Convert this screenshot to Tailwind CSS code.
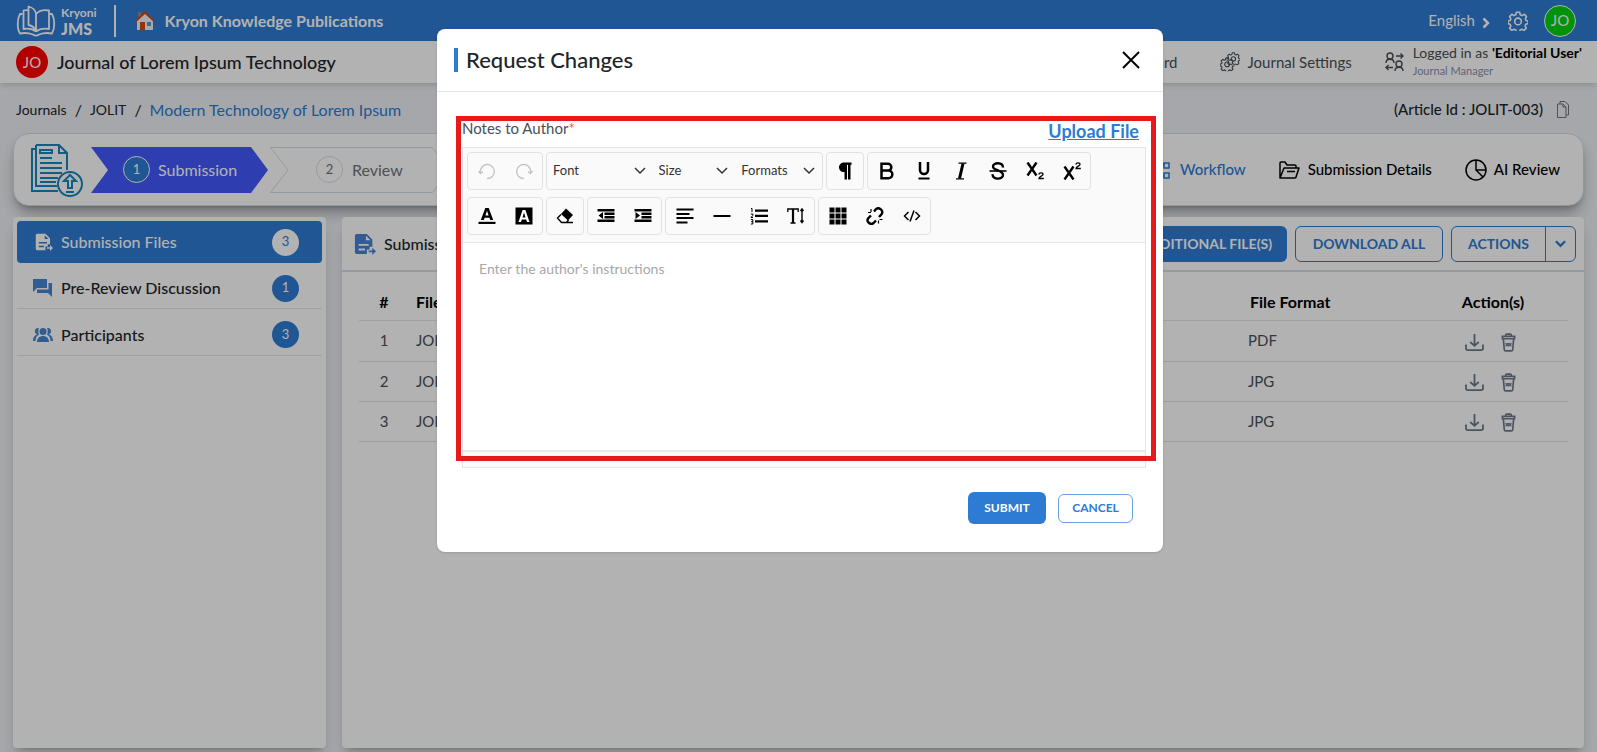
<!DOCTYPE html>
<html lang="en">
<head>
  <meta charset="UTF-8">
  <meta name="viewport" content="width=device-width, initial-scale=1.0">
  <title>Kryoni JMS | Request Changes</title>
  <script src="https://cdn.jsdelivr.net/npm/@tailwindcss/browser@4"></script>
</head>
<body class="relative flex flex-col min-h-screen overflow-hidden bg-[#edf0f4] text-[#212529] font-['Lato','Open_Sans',sans-serif]">

  <!-- Shared icons -->
  <svg class="hidden">
    <symbol id="i-file" viewBox="0 0 24 24">
      <path fill="currentColor" fill-rule="evenodd" d="M3 1h11l6 6v8h-3v3h-3v5H3a2 2 0 0 1-2-2V3a2 2 0 0 1 2-2zm10 2v5h5zM5 12v2h11v-2zm0 5v2h7v-2z"/>
      <path fill="currentColor" d="M16 19h4v-3l4 4-4 4v-3h-4z"/>
    </symbol>
    <symbol id="i-download" viewBox="0 0 20 18">
      <path d="M10 0v12M5.500 8.500 10 12.500l4.500-4M1 11v4a2 2 0 0 0 2 2h14a2 2 0 0 0 2-2v-4" fill="none" stroke="currentColor" stroke-width="1.900"/>
    </symbol>
    <symbol id="i-trash" viewBox="0 0 16 20">
      <path d="M5 3V2a1 1 0 0 1 1-1h4a1 1 0 0 1 1 1v1M1.500 3.500h13V6h-13zM2.500 6l1 11.500a1.500 1.500 0 0 0 1.500 1.500h6a1.500 1.500 0 0 0 1.500-1.500l1-11.500" fill="none" stroke="currentColor" stroke-width="1.800"/>
      <path d="M5 10.500l1.500 3.500L8 10.500l1.500 3.500 1.500-3.500M5 14l1.500-3.500L8 14l1.500-3.500L11 14" fill="none" stroke="currentColor"/>
    </symbol>
    <symbol id="i-chevron" viewBox="0 0 12 8">
      <path d="M1 1l5 5 5-5" fill="none" stroke="currentColor" stroke-width="1.500"/>
    </symbol>
    <symbol id="i-gear" viewBox="0 0 24 24">
      <path d="M10 1.500h4l.7 3 2.200 1 2.700-1.600 2.700 2.800-1.500 2.600.9 2.200 2.500.6v3l-2.800.7-.9 2.200 1.500 2.600-2.700 2.700-2.600-1.500-2.200.9-.6 2.800h-3.800l-.7-2.800-2.200-.9-2.600 1.500-2.700-2.700 1.500-2.600-.9-2.200-2.500-.7v-3l2.500-.6.9-2.200-1.500-2.600 2.700-2.800 2.600 1.600 2.200-1z" fill="none" stroke="currentColor" stroke-width="1.900" stroke-linejoin="round"/>
      <circle cx="12" cy="12.500" r="4" fill="none" stroke="currentColor" stroke-width="1.900"/>
    </symbol>
  </svg>

  <!-- Top bar -->
  <header class="flex items-center h-[41px] pl-4 pr-[21px] bg-[#2d7bd3] text-white">
    <svg class="w-[40px] h-8 mr-[5px]" viewBox="0 0 40 32" fill="none" stroke="currentColor" stroke-width="1.800" stroke-linejoin="round">
      <path d="M20 26.500c-3-2.500-7-3.500-12.500-2.500V5.500c2-.5 3.500-.5 5 0M20 26.500c3-2.500 7-3.500 13-2.500V5.500c-5-1-10 0-13 3.500M12.500 1.500v18.500c3 .5 6 2.500 7.500 6V9.500c0-4-3.500-7-7.500-8z"/>
      <path d="M6.500 9H4C1 14 1 24 4 28.500c5-1 9-.5 13 1 2 1.500 4 1.500 6 0 4-1.500 8-2 13-1 3-5 3-14.500 0-19.500h-2.500"/>
    </svg>
    <div class="leading-[15px]">
      <div class="text-xs font-bold">Kryoni</div>
      <div class="text-base leading-[15px] font-black">JMS</div>
    </div>
    <div class="w-[2px] h-8 ml-[17px] mr-[19px] bg-white"></div>
    <svg class="w-5 h-5" viewBox="0 0 20 20">
      <path d="M2 10l8-8 8 8v9H2z" fill="#f3f3f3"/>
      <path d="M3 1h3v5H3z" fill="#8d8d8d"/>
      <path d="M0 10 10 0l10 10-1 1-9-8-9 8z" fill="#e0400c"/>
      <path d="M5 11h5v8H5z" fill="#d9480f"/>
      <path d="M12 11h4v4h-4z" fill="#38a3e8"/>
    </svg>
    <a href="#" class="ml-[10px] font-bold">Kryon Knowledge Publications</a>
    <button class="flex items-center ml-auto gap-[7px] text-[15px]">English
      <svg class="w-2 h-3 mt-1" viewBox="0 0 8 12"><path d="M1.500 1.500 6 6l-4.500 4.500" fill="none" stroke="currentColor" stroke-width="2.500"/></svg>
    </button>
    <button aria-label="Settings" class="ml-[18px]"><svg class="w-5 h-5"><use href="#i-gear"/></svg></button>
    <button class="w-8 h-8 ml-4 rounded-full border border-white bg-[#00d211] text-[15px]">JO</button>
  </header>

  <!-- Journal bar -->
  <div class="relative flex items-center h-[42px] pl-4 pr-[15px] bg-white shadow-md">
    <span class="flex items-center justify-center w-8 h-8 rounded-full bg-[#ff0000] text-white text-[15px]">JO</span>
    <h1 class="ml-[9px] text-lg font-medium">Journal of Lorem Ipsum Technology</h1>
    <nav class="flex items-center ml-auto text-[15px] text-[#495057]">
      <a href="#">Dashboard</a>
      <a href="#" class="flex items-center gap-2 ml-[42px]">
        <svg class="w-5 h-5" viewBox="0 0 24 24"><use href="#i-gear" x="0" y="6" width="17" height="17"/><use href="#i-gear" x="8" y="0" width="16" height="16"/></svg>
        Journal Settings
      </a>
      <a href="#" class="flex items-center gap-[9px] ml-[33px]">
        <svg class="w-[19px] h-5" viewBox="0 0 19 20" fill="none" stroke="currentColor" stroke-width="1.400">
          <circle cx="5" cy="4" r="3"/><path d="M1 11c0-5 8-5 8 0M11 4h7M15.500 1.500 18 4l-2.500 2.500M8 15.500H1M3.500 13 1 15.500 3.500 18"/>
          <circle cx="14" cy="12" r="3"/><path d="M10 19c0-5 8-5 8 0"/>
        </svg>
        <span class="flex flex-col leading-[18px]">
          <span class="text-sm leading-[18px]">Logged in as <b class="text-black">'Editorial User'</b></span>
          <span class="text-[11px] text-[#8a8fb0]">Journal Manager</span>
        </span>
      </a>
    </nav>
  </div>

  <main class="flex flex-col flex-1 px-[13px] pb-1">
    <!-- Breadcrumb -->
    <div class="flex items-center justify-between h-[50px] pt-[3px] pl-[3px] pr-[15px]">
      <nav class="flex items-center gap-2 text-sm">
        <a href="#">Journals</a><span class="text-base">/</span>
        <a href="#">JOLIT</a><span class="text-base">/</span>
        <a href="#" class="text-base text-[#2d7bd3]">Modern Technology of Lorem Ipsum</a>
      </nav>
      <div class="flex items-center gap-[14px] text-[15px] font-medium">(Article Id : JOLIT-003)
        <button aria-label="Copy"><svg class="w-3 h-[17px]" viewBox="0 0 12 17" fill="none" stroke="#6c757d"><path d="M3 3V.5h5L11.500 4v10H9M.5 3H6l3 3v10.500H.5zM6 3v3h3"/></svg></button>
      </div>
    </div>

    <!-- Workflow steps -->
    <section class="flex items-center h-[73px] pl-4 pr-[23px] rounded-2xl border border-[#cfdcea] bg-white shadow-lg shadow-black/30">
      <svg class="w-[54px] h-[54px]" viewBox="0 0 54 54" fill="none" stroke="#1787bd" stroke-width="2">
        <path d="M6 6H2v42h26M6 2h23l8 8v17M6 2v41h21M29 2v8h8"/>
        <path d="M10 7h12v3H10zM10 15h12M10 20h22M10 25h22M10 30h22M10 35h18M10 39h16"/>
        <circle cx="40" cy="41" r="12" fill="#fff"/>
        <path d="M38 45v-7h-4l6-6 6 6h-4v7zM36 49h8"/>
      </svg>
      <ol class="flex gap-[2px] ml-[7px] text-[#6c757d]">
        <li class="relative flex items-center w-[177px] h-[46px] pl-8 text-white">
          <svg class="absolute inset-0 w-full h-full" viewBox="0 0 177 46"><path d="M0 0h160l17 23-17 23H0l17-23z" fill="#4259fe"/></svg>
          <span class="relative flex items-center justify-center w-[27px] h-[27px] rounded-full border border-white bg-[#2d7bd3] text-[13px]">1</span>
          <span class="relative ml-2 text-base">Submission</span>
        </li>
        <li class="relative flex items-center w-[180px] h-[46px] pl-[46px]">
          <svg class="absolute inset-0 w-full h-full" viewBox="0 0 180 46"><path d="M.5.5h162l17 22.500-17 22.500H.5L18 23z" fill="none" stroke="#d5dde8"/></svg>
          <span class="relative flex items-center justify-center w-[27px] h-[27px] rounded-full border border-[#d5dde8] text-[13px]">2</span>
          <span class="relative ml-[9px] text-base">Review</span>
        </li>
      </ol>
      <nav class="flex items-center gap-[33px] ml-auto text-[15px] font-medium text-black">
        <a href="#" class="flex items-center gap-[10px] text-[#2d7bd3]">
          <svg class="w-5 h-5" viewBox="0 0 20 20" fill="none" stroke="currentColor" stroke-width="1.500"><path d="M1 1h6v6H1zM14 3h5v5h-5zM14 13h5v5h-5zM7 4h7M10 4v12h4"/></svg>
          Workflow
        </a>
        <a href="#" class="flex items-center gap-2">
          <svg class="w-[21px] h-[18px]" viewBox="0 0 21 18" fill="none" stroke="currentColor" stroke-width="1.500" stroke-linejoin="round"><path d="M1 17V2a1 1 0 0 1 1-1h4l2 3h8a1 1 0 0 1 1 1v2M1 17 5 7h15l-3 9a1 1 0 0 1-1 1zM8 10.500h8"/></svg>
          Submission Details
        </a>
        <a href="#" class="flex items-center gap-[7px]">
          <svg class="w-[22px] h-[22px]" viewBox="0 0 22 22" fill="none" stroke="currentColor" stroke-width="1.500"><circle cx="11" cy="11" r="10"/><path d="M11 1v10h10M11 11l7 7"/></svg>
          AI Review
        </a>
      </nav>
    </section>

    <div class="flex flex-1 gap-4 mt-[11px]">
      <!-- Sidebar -->
      <aside class="w-[313px] p-1 rounded bg-white shadow-lg shadow-black/20">
        <a href="#" class="flex items-center h-[42px] pl-[18px] pr-[23px] rounded bg-[#2d7bd3] text-white">
          <svg class="w-[18px] h-[18px]"><use href="#i-file"/></svg>
          <span class="ml-2 font-medium">Submission Files</span>
          <span class="flex items-center justify-center w-[27px] h-[27px] ml-auto rounded-full bg-white text-[#2d7bd3] text-[13px]">3</span>
        </a>
        <a href="#" class="flex items-center h-[46px] pl-4 pr-[23px] border-b border-[#e6e9ec] pt-[5px]">
          <svg class="w-[19px] h-[18px]" viewBox="0 0 19 18" fill="#4585d0"><path d="M0 0h14v9H4l-4 4zM15.500 4H19v14l-4-4H4v-3.500h11.500z"/></svg>
          <span class="ml-[9px] font-medium">Pre-Review Discussion</span>
          <span class="flex items-center justify-center w-[27px] h-[27px] ml-auto rounded-full bg-[#2d7bd3] text-white text-[13px]">1</span>
        </a>
        <a href="#" class="flex items-center h-[47px] pl-4 pr-[23px] border-b border-[#e6e9ec] pt-[5px]">
          <svg class="w-5 h-4" viewBox="0 0 20 16" fill="#4585d0"><circle cx="10" cy="4.500" r="3.500"/><path d="M4 15c0-8 12-8 12 0zM5 1C1 1 1 7 4.500 7.500 1.500 8 0 11 0 14h2.500c0-3 1-5 3.500-6.500C5 5.500 5 3 6 1.300zM15 1c4 0 4 6 .5 6.500C18.500 8 20 11 20 14h-2.500c0-3-1-5-3.500-6.500 1-2 1-4.500 0-6.200z"/></svg>
          <span class="ml-2 font-medium">Participants</span>
          <span class="flex items-center justify-center w-[27px] h-[27px] ml-auto rounded-full bg-[#2d7bd3] text-white text-[13px]">3</span>
        </a>
      </aside>

      <!-- Files -->
      <section class="flex-1 rounded bg-white shadow-lg shadow-black/20">
        <div class="flex items-center h-[55px] pl-3 pr-2 border-b-2 border-[#d3dfe9]">
          <svg class="w-[22px] h-[22px] text-[#4585d0]"><use href="#i-file"/></svg>
          <h2 class="ml-2 font-medium">Submission Files</h2>
          <div class="flex gap-2 ml-auto text-sm font-bold text-[#2d7bd3]">
            <button class="h-9 px-[15px] rounded-md bg-[#2d7bd3] text-white">ADD ADDITIONAL FILE(S)</button>
            <button class="w-[148px] h-9 rounded-md border border-[#2d7bd3]">DOWNLOAD ALL</button>
            <div class="flex h-9 rounded-md border border-[#2d7bd3]">
              <button class="w-[94px] border-r border-[#2d7bd3]">ACTIONS</button>
              <button aria-label="More actions" class="flex items-center justify-center w-[29px]"><svg class="w-[11px] h-[8px]" viewBox="0 0 12 8"><path d="M1 1l5 5 5-5" fill="none" stroke="currentColor" stroke-width="2.500"/></svg></button>
            </div>
          </div>
        </div>
        <div class="pl-[17px] pr-4">
          <table class="w-full table-fixed text-[15px] text-left text-[#495057]">
            <thead>
              <tr class="h-12 border-b border-[#e4e4ee] text-base text-black">
                <th class="w-[50px] pt-3 text-center">#</th>
                <th class="pl-[7px] pt-3">File Name</th>
                <th class="w-[170px] pt-3 pl-[2px]">File Format</th>
                <th class="w-[150px] pt-3 text-center">Action(s)</th>
              </tr>
            </thead>
            <tbody>
              <tr class="h-[41px] border-b border-[#e0e0ea]">
                <td class="text-center">1</td><td class="pl-[7px]">JOLIT-003-Manuscript.pdf</td><td>PDF</td>
                <td class="pt-[3px] pr-[6px]"><div class="flex justify-center gap-[17px] text-[#6c7a8c]"><button aria-label="Download"><svg class="w-[19px] h-[17px]"><use href="#i-download"/></svg></button><button aria-label="Delete"><svg class="w-[15px] h-[19px]"><use href="#i-trash"/></svg></button></div></td>
              </tr>
              <tr class="h-10 border-b border-[#e0e0ea]">
                <td class="text-center">2</td><td class="pl-[7px]">JOLIT-003-Figure-1.jpg</td><td>JPG</td>
                <td class="pt-[3px] pr-[6px]"><div class="flex justify-center gap-[17px] text-[#6c7a8c]"><button aria-label="Download"><svg class="w-[19px] h-[17px]"><use href="#i-download"/></svg></button><button aria-label="Delete"><svg class="w-[15px] h-[19px]"><use href="#i-trash"/></svg></button></div></td>
              </tr>
              <tr class="h-10 border-b border-[#e0e0ea]">
                <td class="text-center">3</td><td class="pl-[7px]">JOLIT-003-Figure-2.jpg</td><td>JPG</td>
                <td class="pt-[3px] pr-[6px]"><div class="flex justify-center gap-[17px] text-[#6c7a8c]"><button aria-label="Download"><svg class="w-[19px] h-[17px]"><use href="#i-download"/></svg></button><button aria-label="Delete"><svg class="w-[15px] h-[19px]"><use href="#i-trash"/></svg></button></div></td>
              </tr>
            </tbody>
          </table>
        </div>
      </section>
    </div>
  </main>

  <!-- Modal -->
  <div class="absolute inset-0 flex items-start justify-center pt-[29px] pl-[3px] bg-black/30">
    <form role="dialog" aria-labelledby="dialog-title" class="relative w-full max-w-[726px] rounded-lg bg-white shadow">
      <div class="flex items-center h-[63px] pl-[17px] pr-[23px] border-b border-[#e3e6e9]">
        <span class="w-1 h-6 bg-[#2d7bd3]"></span>
        <h2 id="dialog-title" class="ml-2 text-[22px] leading-7 font-medium">Request Changes</h2>
        <button type="button" aria-label="Close" class="ml-auto"><svg class="w-[18px] h-[18px]" viewBox="0 0 18 18"><path d="M1 1l16 16M17 1 1 17" stroke="#000" stroke-width="2"/></svg></button>
      </div>

      <div class="pt-6 pl-[25px] pr-[17px]">
        <div class="flex justify-between items-start h-[31px] pr-[7px]">
          <label for="notes" class="text-[15px] leading-6 text-[#495057]">Notes to Author<span class="text-[#ff5722]">*</span></label>
          <a href="#" class="text-lg leading-[30px] font-bold underline text-[#2d7bd3]">Upload File</a>
        </div>

        <!-- Editor -->
        <div class="border border-[#e5e5e5]">
          <div class="flex flex-col gap-[7px] pt-1 pb-[7px] pl-1 border-b border-[#e5e5e5] bg-[#fafafa] text-black">
            <div class="flex gap-[3px]">
              <div class="flex h-[38px] rounded border border-[#e2e2e2] text-[#c4c4c4]">
                <button type="button" aria-label="Undo" class="flex items-center justify-center w-[37px]"><svg class="w-[18px] h-[18px]" viewBox="0 0 18 18" fill="none" stroke="currentColor" stroke-width="1.400"><path d="M2.500 11a7 7 0 1 1 6.500 5.500M.5 9l2 2.500L5 9.500"/></svg></button>
                <button type="button" aria-label="Redo" class="flex items-center justify-center w-[37px]"><svg class="w-[18px] h-[18px]" viewBox="0 0 18 18" fill="none" stroke="currentColor" stroke-width="1.400"><path d="M15.500 11A7 7 0 1 0 9 16.500M17.500 9l-2 2.500L13 9.500"/></svg></button>
              </div>
              <div class="flex items-center w-[277px] h-[38px] rounded border border-[#e2e2e2] text-[13px] text-[#333]">
                <div class="relative flex items-center w-[106px]">
                  <select aria-label="Font" class="w-full pl-[6px] appearance-none outline-none"><option>Font</option></select>
                  <svg class="absolute right-[7px] w-3 h-2 pointer-events-none"><use href="#i-chevron"/></svg>
                </div>
                <div class="relative flex items-center w-[83px]">
                  <select aria-label="Size" class="w-full pl-[6px] appearance-none outline-none"><option>Size</option></select>
                  <svg class="absolute right-[7px] w-3 h-2 pointer-events-none"><use href="#i-chevron"/></svg>
                </div>
                <div class="relative flex items-center w-[87px]">
                  <select aria-label="Formats" class="w-full pl-[6px] appearance-none outline-none"><option>Formats</option></select>
                  <svg class="absolute right-[7px] w-3 h-2 pointer-events-none"><use href="#i-chevron"/></svg>
                </div>
              </div>
              <div class="flex h-[38px] rounded border border-[#e2e2e2]">
                <button type="button" aria-label="Paragraph" class="flex items-center justify-center w-[36px]"><svg class="w-[18px] h-[18px]" viewBox="0 0 18 18"><path d="M7 .5h8.500v2.200H14.500v14.800H12V2.700h-1v14.800H8.500V10a4.800 4.800 0 0 1-1.500-9.500z"/></svg></button>
              </div>
              <div class="flex h-[38px] rounded border border-[#e2e2e2]">
                <button type="button" aria-label="Bold" class="flex items-center justify-center w-[37px]"><svg class="w-[18px] h-[18px]" viewBox="0 0 18 18" fill="none" stroke="currentColor" stroke-width="2.500"><path d="M3.500 1.800h6.500a3.200 3.200 0 0 1 0 6.700H3.500h7a3.800 3.800 0 0 1 0 7.700h-7z"/></svg></button>
                <button type="button" aria-label="Underline" class="flex items-center justify-center w-[37px]"><svg class="w-[18px] h-[18px]" viewBox="0 0 18 18" fill="none" stroke="currentColor" stroke-width="2.500"><path d="M5 0v8a4 4 0 0 0 8 0V0"/><path d="M3.500 16.500h11" stroke-width="2"/></svg></button>
                <button type="button" aria-label="Italic" class="flex items-center justify-center w-[37px]"><svg class="w-[18px] h-[18px]" viewBox="0 0 18 18" fill="none" stroke="currentColor"><path d="M11 1.500 7.500 16.500" stroke-width="3"/><path d="M6.500 1.200h8M4 16.800h8" stroke-width="1.300"/></svg></button>
                <button type="button" aria-label="Strikethrough" class="flex items-center justify-center w-[37px]"><svg class="w-[18px] h-[18px]" viewBox="0 0 18 18" fill="none" stroke="currentColor" stroke-width="2.400"><path d="M14 5.500c0-5.500-10-5.500-10-1C4 9 14 8 14 13c0 5-10.500 5-10.500-.8"/><path d="M.5 9h17" stroke-width="1.600"/></svg></button>
                <button type="button" aria-label="Subscript" class="flex items-center justify-center w-[37px]"><svg class="w-[18px] h-[18px]" viewBox="0 0 18 18" fill="none" stroke="currentColor"><path d="M1.500.5l9 13M10.500.5l-9 13" stroke-width="2.400"/><path d="M13 12.500c0-2.200 4-2.200 4 0 0 1.500-4 2-4 4h4.800" stroke-width="1.300"/></svg></button>
                <button type="button" aria-label="Superscript" class="flex items-center justify-center w-[37px]"><svg class="w-[18px] h-[18px]" viewBox="0 0 18 18" fill="none" stroke="currentColor"><path d="M1.500 4.500l9 13M10.500 4.500l-9 13" stroke-width="2.400"/><path d="M13 2.500c0-2.200 4-2.200 4 0 0 1.500-4 2-4 4h4.800" stroke-width="1.300"/></svg></button>
              </div>
            </div>

            <div class="flex gap-[3px]">
              <div class="flex h-[38px] rounded border border-[#e2e2e2]">
                <button type="button" aria-label="Text colour" class="flex items-center justify-center w-[37px]"><svg class="w-[18px] h-[18px]" viewBox="0 0 18 18"><path d="M.5 14.800h17v2.200H.5z"/><path fill-rule="evenodd" d="M2.800 13 7.300 1h3.400l4.500 12h-3l-.8-2.300H6.600L5.800 13zM9 3.800 7.400 8.500h3.200z"/></svg></button>
                <button type="button" aria-label="Background colour" class="flex items-center justify-center w-[37px]"><svg class="w-[18px] h-[18px]" viewBox="0 0 18 18"><path d="M.5.5h17v17H.5z"/><path fill="#fff" fill-rule="evenodd" d="M3.500 15 7.600 3h2.800l4.100 12H12l-.8-2.500H6.800L6 15zM9 5.500 7.500 10.500h3z"/></svg></button>
              </div>
              <div class="flex h-[38px] rounded border border-[#e2e2e2]">
                <button type="button" aria-label="Clear format" class="flex items-center justify-center w-[36px]"><svg class="w-[18px] h-[18px]" viewBox="0 0 18 18"><path d="M10 1.500l7 6.500-5 5.500L5 7z"/><path d="M5 7.500 1.500 11l4 4.500h5l2-2.500M5 15.500h12" fill="none" stroke="currentColor" stroke-width="1.400"/></svg></button>
              </div>
              <div class="flex h-[38px] rounded border border-[#e2e2e2]">
                <button type="button" aria-label="Outdent" class="flex items-center justify-center w-[36px]"><svg class="w-[18px] h-[18px]" viewBox="0 0 18 18"><path d="M.5 2h17v2.500H.5zM7.500 5.500h10V8h-10zM7.500 9h10v2.500h-10zM.5 12.500h17V15H.5zM6 5v7L1.500 8.500z"/></svg></button>
                <button type="button" aria-label="Indent" class="flex items-center justify-center w-[37px]"><svg class="w-[18px] h-[18px]" viewBox="0 0 18 18"><path d="M.5 2h17v2.500H.5zM7.500 5.500h10V8h-10zM7.500 9h10v2.500h-10zM.5 12.500h17V15H.5zM1.500 5v7L6 8.500z"/></svg></button>
              </div>
              <div class="flex h-[38px] rounded border border-[#e2e2e2]">
                <button type="button" aria-label="Align left" class="flex items-center justify-center w-[37px]"><svg class="w-[18px] h-[18px]" viewBox="0 0 18 18"><path d="M.5 1.500h17v2H.5zM.5 6h13v2H.5zM.5 10h17v2H.5zM.5 14.500h11v2H.5z"/></svg></button>
                <button type="button" aria-label="Horizontal line" class="flex items-center justify-center w-[37px]"><svg class="w-[18px] h-[18px]" viewBox="0 0 18 18"><path d="M.5 8h17v2H.5z"/></svg></button>
                <button type="button" aria-label="Numbered list" class="flex items-center justify-center w-[37px]"><svg class="w-[18px] h-[18px]" viewBox="0 0 18 18"><path d="M5 2.500h13v2.200H5zM5 7.800h13V10H5zM5 13.300h13v2.200H5z"/><path d="M1 1.500h1V5M.8 7h2v1.500L1 10.500h2M.8 12.500h2V17h-2M1 14.700h1.800" fill="none" stroke="currentColor"/></svg></button>
                <button type="button" aria-label="Line height" class="flex items-center justify-center w-[37px]"><svg class="w-[18px] h-[18px]" viewBox="0 0 18 18"><path d="M.8 5V2h10.400v3M3.500 16h5" fill="none" stroke="currentColor" stroke-width="1.300"/><path d="M6 2v14" stroke="currentColor" stroke-width="2.200"/><path d="M15 2.500v12M13.500 4l1.500-2 1.500 2M13.500 13.500l1.500 2 1.500-2" fill="none" stroke="currentColor" stroke-width="1.400"/></svg></button>
              </div>
              <div class="flex h-[38px] rounded border border-[#e2e2e2]">
                <button type="button" aria-label="Table" class="flex items-center justify-center w-[37px]"><svg class="w-[18px] h-[18px]" viewBox="0 0 18 18"><path d="M.5.5h5v5h-5zM6.500.5h5v5h-5zM12.500.5h5v5h-5zM.5 6.500h5v5h-5zM6.500 6.500h5v5h-5zM12.500 6.500h5v5h-5zM.5 12.500h5v5h-5zM6.500 12.500h5v5h-5zM12.500 12.500h5v5h-5z"/></svg></button>
                <button type="button" aria-label="Remove link" class="flex items-center justify-center w-[37px]"><svg class="w-[18px] h-[18px]" viewBox="0 0 18 18" fill="none" stroke="currentColor" stroke-width="2.400"><path d="M8 4.500l2-2.300c3-2.500 8 1.500 5.500 5L13 10M10 13.500l-2.500 2.500c-3 2.500-8-1.500-5-5L5 8.500"/><path d="M5 2v3M2 5.500h3M13.500 12.500h3M12.500 13.500v3" stroke-width="1.200"/></svg></button>
                <button type="button" aria-label="Source code" class="flex items-center justify-center w-[37px]"><svg class="w-[18px] h-[18px]" viewBox="0 0 18 18" fill="none" stroke="currentColor" stroke-width="1.500"><path d="M5.500 5 1.500 9l4 4M12.500 5l4 4-4 4M11 3.500l-4 11"/></svg></button>
              </div>
            </div>
          </div>
          <textarea id="notes" placeholder="Enter the author's instructions" class="block w-full h-[207px] pt-4 px-4 text-sm outline-none resize-none placeholder:text-[#a8a8a8]"></textarea>
          <div class="h-[17px] border-t-2 border-[#e8e8e8] bg-[#fafafa]"></div>
        </div>
      </div>

      <div class="flex items-center justify-end gap-3 pt-6 pb-7 pr-[30px] text-xs font-bold">
        <button type="submit" class="w-[78px] h-8 rounded-md bg-[#2d7bd3] text-white">SUBMIT</button>
        <button type="button" class="w-[75px] h-[29px] rounded-md border border-[#6ba3e2] text-[#2d7bd3]">CANCEL</button>
      </div>

      <!-- Highlight frame -->
      <div class="absolute top-[87px] left-[19px] right-[7px] bottom-[91px] border-[5px] border-[#e8191b] pointer-events-none"></div>
    </form>
  </div>
</body>
</html>
